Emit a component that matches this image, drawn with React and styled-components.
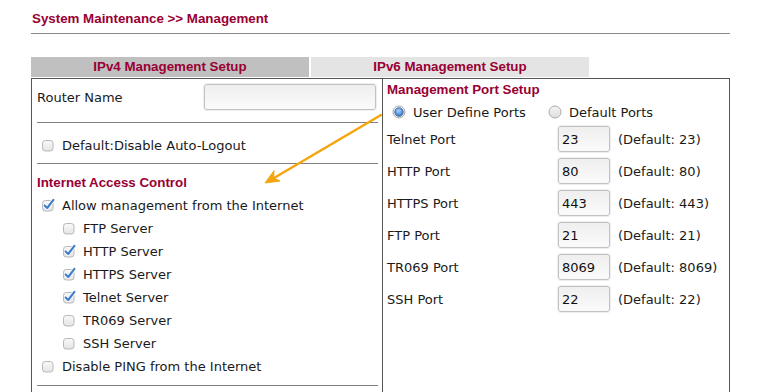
import React from "react";
import styled, { createGlobalStyle } from "styled-components";

const MAROON = "#990033";

const GlobalStyle = createGlobalStyle`
  html, body { margin: 0; padding: 0; background: #fff; }
  body {
    font-family: "DejaVu Sans", "Liberation Sans", sans-serif;
    font-size: 13px;
    color: #1a1a1a;
  }
  #root { width: 760px; height: 392px; overflow: hidden; }
`;

const Page = styled.div`
  position: relative;
  width: 699px;
  height: 392px;
  padding-left: 31px;
`;

const Title = styled.h1`
  margin: 0;
  padding: 11px 0 0 1px;
  height: 22px;
  font: bold 13.33px/16px "Liberation Sans", Arial, sans-serif;
  color: ${MAROON};
  border-bottom: 1px solid #8a8a8a;
`;

const TabBar = styled.div`
  display: grid;
  grid-template-columns: 278px 278px;
  column-gap: 2px;
  margin-top: 23px;
  margin-bottom: 1px;
`;

const Tab = styled.div`
  height: 20px;
  text-align: center;
  font: bold 13.33px/20px "Liberation Sans", Arial, sans-serif;
  color: ${MAROON};
  background: ${(p) => (p.$active ? "#c0c0c0" : "#e4e4e4")};
`;

const Frame = styled.div`
  display: grid;
  grid-template-columns: 351px 1fr;
  border: 1px solid #555;
  border-bottom: none;
  height: 320px;
`;

const LeftCell = styled.div`
  padding: 0 4px 0 5px;
  border-right: 1px solid #555;
`;

const RightCell = styled.div`
  padding: 0 4px;
`;

const RouterRow = styled.div`
  display: flex;
  align-items: center;
  justify-content: space-between;
  height: 26px;
  margin-top: 5px;
`;

const TextInput = styled.input`
  box-sizing: border-box;
  width: ${(p) => p.$w}px;
  height: 26px;
  margin: 0 ${(p) => p.$mr || 0}px 0 0;
  padding: 0 3px;
  border: 1px solid #c2c2c2;
  border-radius: 3px;
  background: linear-gradient(#efefef, #fbfbfb);
  box-shadow: 0 0 0 1px #eeeeee;
  font: 13px "DejaVu Sans", sans-serif;
  color: #111;
  outline: none;
`;

const Divider = styled.div`
  height: 1px;
  background: #808080;
  margin-top: ${(p) => p.$top}px;
`;

const CheckRow = styled.label`
  display: flex;
  align-items: center;
  height: 23px;
  margin-top: ${(p) => p.$top || 0}px;
  padding-left: ${(p) => p.$indent}px;
  white-space: nowrap;
`;

const BoxWrap = styled.span`
  display: flex;
  width: 21px;
  height: 16px;
  margin-bottom: 2px;
  flex: none;
`;

const Heading = styled.div`
  height: ${(p) => p.$h}px;
  margin-top: ${(p) => p.$top || 0}px;
  font: bold 13.33px/${(p) => p.$h}px "Liberation Sans", Arial, sans-serif;
  color: ${MAROON};
`;

const RadioRow = styled.div`
  display: flex;
  align-items: center;
  height: 22px;
  padding-left: 5px;
  gap: 22px;
`;

const RadioOption = styled.label`
  display: flex;
  align-items: center;
  gap: 7px;
  white-space: nowrap;
`;

const PortRow = styled.div`
  display: grid;
  grid-template-columns: 171px 60px auto;
  align-items: center;
  height: 32px;
  white-space: nowrap;
`;

const ArrowLayer = styled.svg`
  position: absolute;
  left: 0;
  top: 0;
  pointer-events: none;
`;

function CheckBox({ checked }) {
  return (
    <BoxWrap>
      <svg width="16" height="16" viewBox="0 0 16 16">
        <defs>
          <linearGradient id="cbg" x1="0" y1="0" x2="0" y2="1">
            <stop offset="0" stopColor="#f9f9f9" />
            <stop offset="1" stopColor="#e4e4e4" />
          </linearGradient>
        </defs>
        <rect x="1.5" y="3.5" width="10.5" height="10.5" rx="2.8" fill="url(#cbg)" stroke="#b8b8b8" />
        {checked && (
          <>
            <path d="M3.6 8.4 L6.2 11 L12.4 2.8" fill="none" stroke="#ffffff" strokeWidth="3.6" strokeLinecap="round" strokeLinejoin="round" />
            <path d="M3.6 8.4 L6.2 11 L12.4 2.8" fill="none" stroke="#3f7ecb" strokeWidth="2.1" strokeLinecap="round" strokeLinejoin="round" />
          </>
        )}
      </svg>
    </BoxWrap>
  );
}

function Radio({ checked }) {
  return (
    <svg width="14" height="14" viewBox="0 0 14 14">
      <defs>
        <linearGradient id="rbg" x1="0" y1="0" x2="0" y2="1">
          <stop offset="0" stopColor="#f4f4f4" />
          <stop offset="1" stopColor="#dedede" />
        </linearGradient>
        <radialGradient id="rdot" cx="0.45" cy="0.35" r="0.7">
          <stop offset="0" stopColor="#a9d2fb" />
          <stop offset="1" stopColor="#2f6fc4" />
        </radialGradient>
      </defs>
      <circle cx="7" cy="7" r="6" fill="url(#rbg)" stroke="#ababab" />
      {checked && <circle cx="7" cy="7" r="4.2" fill="url(#rdot)" stroke="#2a5fa6" strokeWidth="0.8" />}
    </svg>
  );
}

const services = [
  { name: "FTP Server", on: false },
  { name: "HTTP Server", on: true },
  { name: "HTTPS Server", on: true },
  { name: "Telnet Server", on: true },
  { name: "TR069 Server", on: false },
  { name: "SSH Server", on: false },
];

const ports = [
  { name: "Telnet Port", value: "23", def: "23" },
  { name: "HTTP Port", value: "80", def: "80" },
  { name: "HTTPS Port", value: "443", def: "443" },
  { name: "FTP Port", value: "21", def: "21" },
  { name: "TR069 Port", value: "8069", def: "8069" },
  { name: "SSH Port", value: "22", def: "22" },
];

export default function App() {
  return (
    <>
      <GlobalStyle />
      <Page>
        <Title>System Maintenance &gt;&gt; Management</Title>
        <TabBar>
          <Tab $active>IPv4 Management Setup</Tab>
          <Tab>IPv6 Management Setup</Tab>
        </TabBar>
        <Frame>
          <LeftCell>
            <RouterRow>
              <span>Router Name</span>
              <TextInput $w={172} $mr={2} defaultValue="" />
            </RouterRow>
            <Divider $top={12} />
            <CheckRow $indent={4} $top={11}>
              <CheckBox />
              Default:Disable Auto-Logout
            </CheckRow>
            <Divider $top={6} />
            <Heading $h={23} $top={7}>Internet Access Control</Heading>
            <CheckRow $indent={4}>
              <CheckBox checked />
              Allow management from the Internet
            </CheckRow>
            {services.map((s) => (
              <CheckRow key={s.name} $indent={25}>
                <CheckBox checked={s.on} />
                {s.name}
              </CheckRow>
            ))}
            <CheckRow $indent={4}>
              <CheckBox />
              Disable PING from the Internet
            </CheckRow>
            <Divider $top={7} />
          </LeftCell>
          <RightCell>
            <Heading $h={22}>Management Port Setup</Heading>
            <RadioRow>
              <RadioOption>
                <Radio checked />
                User Define Ports
              </RadioOption>
              <RadioOption>
                <Radio />
                Default Ports
              </RadioOption>
            </RadioRow>
            {ports.map((p) => (
              <PortRow key={p.name}>
                <span>{p.name}</span>
                <TextInput $w={52} defaultValue={p.value} />
                <span>(Default: {p.def})</span>
              </PortRow>
            ))}
          </RightCell>
        </Frame>
        <ArrowLayer width="760" height="392" viewBox="0 0 760 392">
          <line x1="381" y1="115" x2="274" y2="178" stroke="#f6a50e" strokeWidth="2.6" strokeLinecap="round" />
          <polygon points="265,183 274,170.7 273.6,177.9 280.1,181" fill="#f6a50e" stroke="#f6a50e" strokeWidth="1" strokeLinejoin="round" />
        </ArrowLayer>
      </Page>
    </>
  );
}
